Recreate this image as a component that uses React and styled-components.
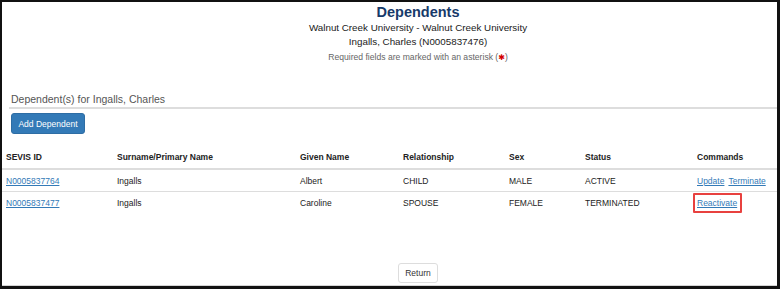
import { styled, createGlobalStyle } from "styled-components";

const GlobalStyle = createGlobalStyle`
  body {
    margin: 0;
    background: #fff;
    font-family: "Liberation Sans", Arial, sans-serif;
  }
`;

const dependents = [
  {
    id: "N0005837764",
    surname: "Ingalls",
    given: "Albert",
    relationship: "CHILD",
    sex: "MALE",
    status: "ACTIVE",
    commands: ["Update", "Terminate"],
  },
  {
    id: "N0005837477",
    surname: "Ingalls",
    given: "Caroline",
    relationship: "SPOUSE",
    sex: "FEMALE",
    status: "TERMINATED",
    commands: ["Reactivate"],
    highlight: true,
  },
];

const columns = [
  { label: "SEVIS ID", width: 111 },
  { label: "Surname/Primary Name", width: 183 },
  { label: "Given Name", width: 103 },
  { label: "Relationship", width: 106 },
  { label: "Sex", width: 76 },
  { label: "Status", width: 112 },
  { label: "Commands" },
];

const App = () => {
  return (
    <>
      <GlobalStyle />
      <Frame>
        <PageHeader>
          <Title>Dependents</Title>
          <SubLine>Walnut Creek University - Walnut Creek University</SubLine>
          <SubLine>Ingalls, Charles (N0005837476)</SubLine>
          <Required>
            Required fields are marked with an asterisk (<Star>✱</Star>)
          </Required>
        </PageHeader>

        <Section>
          <SectionTitle>Dependent(s) for Ingalls, Charles</SectionTitle>
          <PrimaryBtn>Add Dependent</PrimaryBtn>
        </Section>

        <Table>
          <colgroup>
            {columns.map((c) => (
              <col key={c.label} style={c.width ? { width: c.width } : undefined} />
            ))}
          </colgroup>
          <thead>
            <tr>
              {columns.map((c) => (
                <Th key={c.label}>{c.label}</Th>
              ))}
            </tr>
          </thead>
          <tbody>
            {dependents.map((d, i) => (
              <Row key={d.id} $last={i === dependents.length - 1}>
                <Td>
                  <Link href="#">{d.id}</Link>
                </Td>
                <Td>{d.surname}</Td>
                <Td>{d.given}</Td>
                <Td>{d.relationship}</Td>
                <Td>{d.sex}</Td>
                <Td>{d.status}</Td>
                <Td>
                  <Commands>
                    {d.commands.map((cmd) =>
                      d.highlight ? (
                        <Highlight key={cmd}>
                          <Link href="#">{cmd}</Link>
                        </Highlight>
                      ) : (
                        <Link key={cmd} href="#">
                          {cmd}
                        </Link>
                      )
                    )}
                  </Commands>
                </Td>
              </Row>
            ))}
          </tbody>
        </Table>

        <Footer>
          <DefaultBtn>Return</DefaultBtn>
        </Footer>
      </Frame>
    </>
  );
};

const Frame = styled.div`
  box-sizing: border-box;
  width: 780px;
  height: 289px;
  border: 2px solid #111;
  border-right-width: 3px;
  border-bottom-width: 3px;
  display: flex;
  flex-direction: column;
  color: #222;
`;

const PageHeader = styled.div`
  display: flex;
  flex-direction: column;
  align-items: center;
  padding: 1px 0 0 57px;
`;

const Title = styled.h1`
  margin: 0;
  font-size: 14.5px;
  line-height: 18px;
  font-weight: 700;
  color: #173a6a;
`;

const SubLine = styled.div`
  font-size: 9.8px;
  line-height: 14px;
  color: #1a1a1a;
`;

const Required = styled.div`
  margin-top: 1px;
  font-size: 8.6px;
  line-height: 15px;
  color: #666;
`;

const Star = styled.span`
  color: #d40000;
  font-family: "DejaVu Sans", sans-serif;
  font-size: 8px;
`;

const Section = styled.div`
  margin-top: 26px;
  padding-left: 7px;
`;

const SectionTitle = styled.h2`
  margin: 0;
  padding-left: 2px;
  font-size: 10.5px;
  line-height: 16px;
  font-weight: 400;
  color: #555;
  border-bottom: 2px solid #ddd;
`;

const PrimaryBtn = styled.button`
  margin: 4px 0 0 2px;
  width: 74px;
  height: 21px;
  padding: 0;
  border: 1px solid #2e6da4;
  border-radius: 3px;
  background: #337ab7;
  color: #fff;
  font-family: inherit;
  font-size: 8.5px;
`;

const Table = styled.table`
  margin-top: 11px;
  width: 100%;
  border-collapse: collapse;
  table-layout: fixed;
  font-size: 8.5px;
`;

const Th = styled.th`
  text-align: left;
  font-weight: 700;
  padding: 0 0 0 4px;
  height: 23px;
  border-bottom: 2px solid #ddd;
  color: #222;
`;

const Row = styled.tr`
  border-bottom: ${(p) => (p.$last ? "none" : "1px solid #ddd")};
`;

const Td = styled.td`
  padding: 0 0 0 4px;
  height: 21px;
  color: #222;
  white-space: nowrap;
`;

const Commands = styled.div`
  display: flex;
  align-items: center;
  gap: 4px;
`;

const Link = styled.a`
  color: #337ab7;
  text-decoration: underline;
`;

const Highlight = styled.span`
  display: inline-block;
  margin-left: -4px;
  padding: 3px 3px 3px 2px;
  border: 2px solid #e8413f;
  border-radius: 1px;
`;

const Footer = styled.div`
  margin-top: auto;
  display: flex;
  justify-content: center;
  padding: 0 0 2px 57px;
  border-bottom: 1px solid #d4d4d4;
`;

const DefaultBtn = styled.button`
  width: 40px;
  height: 20px;
  padding: 0;
  border: 1px solid #ddd;
  border-radius: 3px;
  background: #fff;
  color: #333;
  font-family: inherit;
  font-size: 8.5px;
`;

export default App;
